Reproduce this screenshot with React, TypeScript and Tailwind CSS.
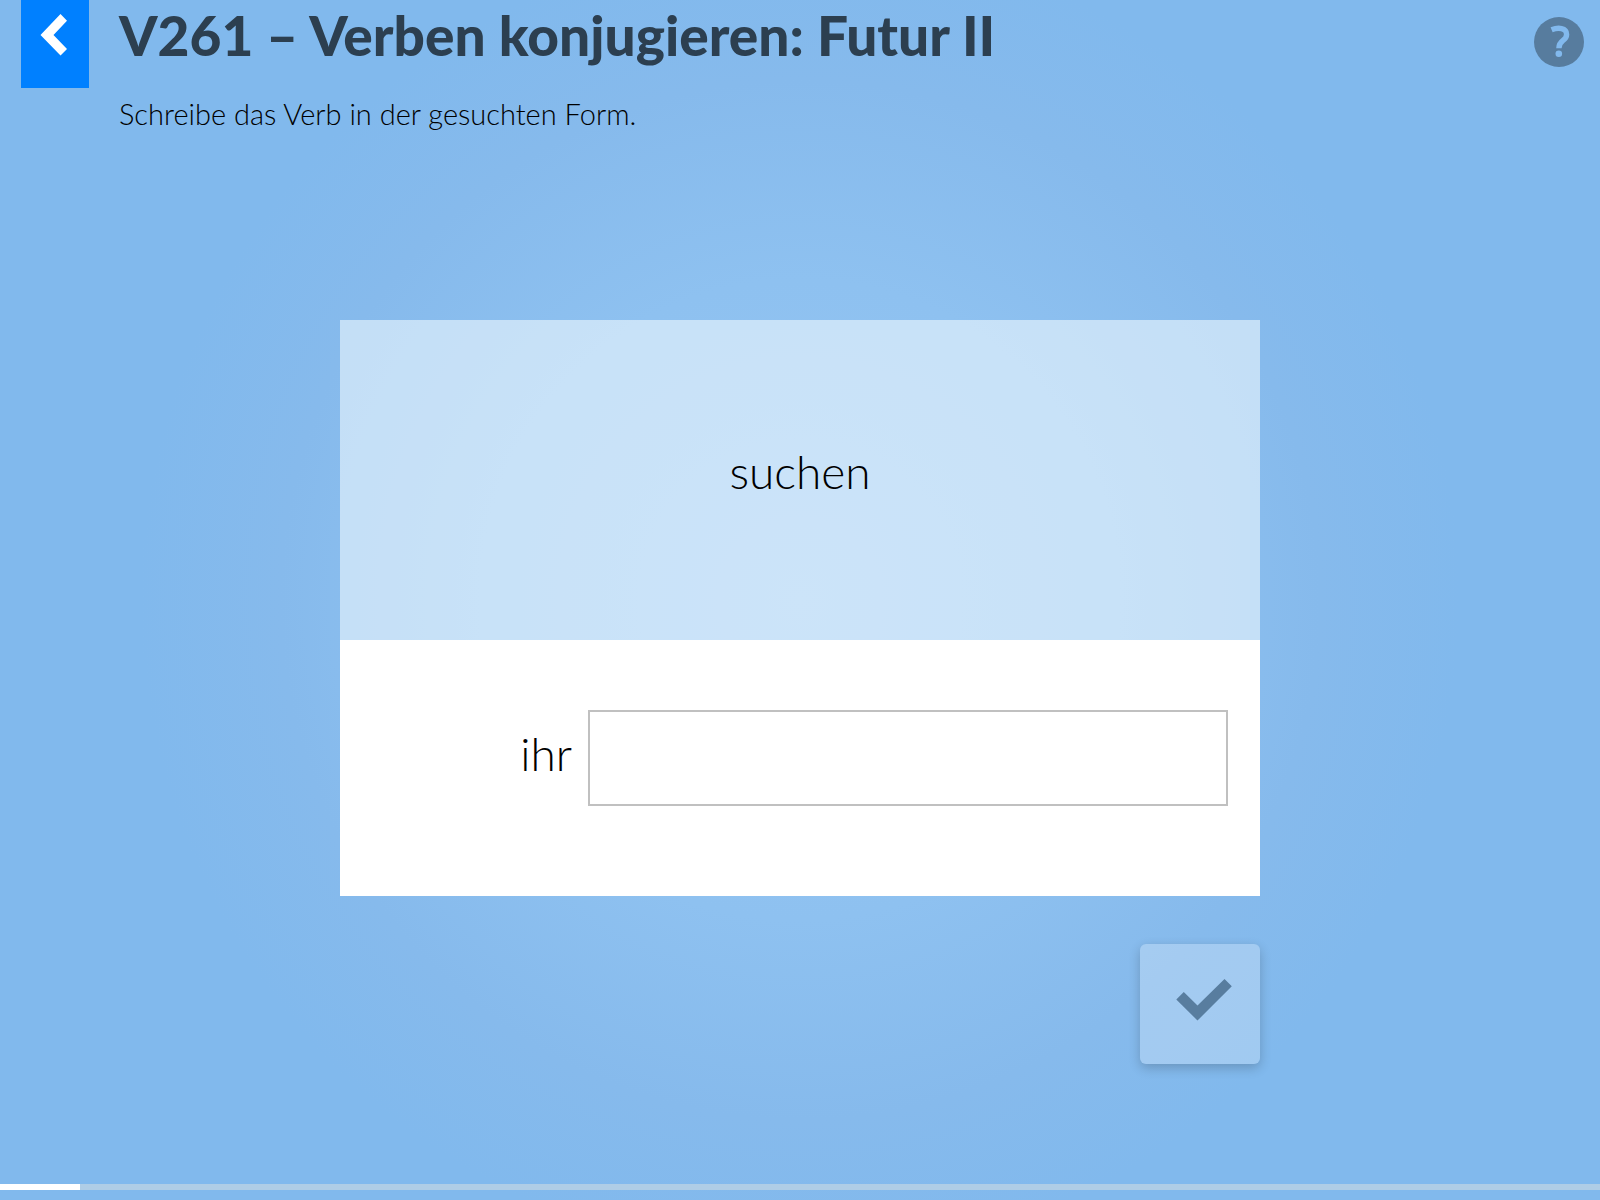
import React from "react";

interface ExerciseProps {
    verb: string;
    pronoun: string;
}

const BackIcon = () => (
    <svg viewBox="0 0 28 42" className="w-7 h-[42px]" fill="currentColor" aria-hidden="true">
        <path d="M20.5 0 L27 6.7 L13.5 21 L27 35 L20.5 41.5 L0.5 21 Z" />
    </svg>
);

const HelpIcon = () => (
    <svg viewBox="0 0 50 50" className="w-[50px] h-[50px]" aria-hidden="true">
        <circle cx="25" cy="25" r="25" fill="#577c9e" />
        <path d="M17.6 12.8 C24 10.2 32.6 10.6 32.6 17.4 C32.6 24.4 24.9 22.6 24.9 31.2" fill="none" stroke="#82b9ed" strokeWidth="5.4" />
        <circle cx="24.8" cy="36.8" r="3.3" fill="#82b9ed" />
    </svg>
);

const CheckIcon = () => (
    <svg viewBox="0 0 56 42" className="w-14 h-[42px]" fill="#587d9f" aria-hidden="true">
        <path d="M0.3 20.5 L7.8 13 L21.5 26.4 L48.5 0 L55.8 7.3 L21.5 41.5 Z" />
    </svg>
);

const Exercise: React.FC<ExerciseProps> = ({ verb, pronoun }) => {
    const [answer, setAnswer] = React.useState<string>("");

    return (
        <form className="w-full max-w-[920px] mx-auto flex flex-col items-end gap-12" onSubmit={(e) => e.preventDefault()}>
            <div className="w-full text-[46px] leading-[48px] font-light text-black">
                <div className="h-80 flex items-center justify-center pb-4 bg-[#fbffff]/53">{verb}</div>
                <div className="h-64 flex items-center justify-end gap-4 px-8 pb-5 bg-white">
                    <label htmlFor="answer" className="pb-2">{pronoun}</label>
                    <input id="answer" type="text" autoComplete="off" value={answer} onChange={(e) => setAnswer(e.target.value)}
                        className="w-full max-w-[640px] h-24 px-4 border-2 border-[#c0c0c0] bg-white outline-none" />
                </div>
            </div>
            <button type="submit" aria-label="Antwort prüfen" className="h-[120px] w-[120px] grid place-items-center rounded-md pl-2 pb-2 bg-white/25 shadow-[0_4px_12px_rgba(0,0,0,0.2)]">
                <CheckIcon />
            </button>
        </form>
    );
};

const App: React.FC = () => {
    const progress = 5;

    return (
        <div className="min-h-screen flex flex-col font-['Lato',sans-serif] bg-[radial-gradient(circle_at_center,#96c5f3_0px,#8ec1f0_320px,#86baec_520px,#81b9ed_660px)]">
            <header className="flex items-start pl-[21px] pr-4">
                <button type="button" aria-label="Zurück" className="h-[88px] w-[68px] shrink-0 flex justify-center pt-[14px] pr-[2px] bg-[#0080ff] text-white">
                    <BackIcon />
                </button>
                <div className="grow pl-[30px]">
                    <h1 className="text-[55px] leading-[70px] font-black text-[#2c3f50]">V261 – Verben konjugieren: Futur II</h1>
                    <p className="pt-6 text-[29px] leading-[40px] font-light text-black">Schreibe das Verb in der gesuchten Form.</p>
                </div>
                <button type="button" aria-label="Hilfe" className="mt-[17px] shrink-0">
                    <HelpIcon />
                </button>
            </header>
            <main className="grow pt-[186px] px-4">
                <Exercise verb="suchen" pronoun="ihr" />
            </main>
            {/* Progress */}
            <div role="progressbar" aria-label="Fortschritt" aria-valuenow={progress} aria-valuemin={0} aria-valuemax={100} className="h-[6px] mb-[10px] bg-[#afcde6]">
                <div className="h-full bg-white" style={{ width: `${progress}%` }} />
            </div>
        </div>
    );
};

export default App;
